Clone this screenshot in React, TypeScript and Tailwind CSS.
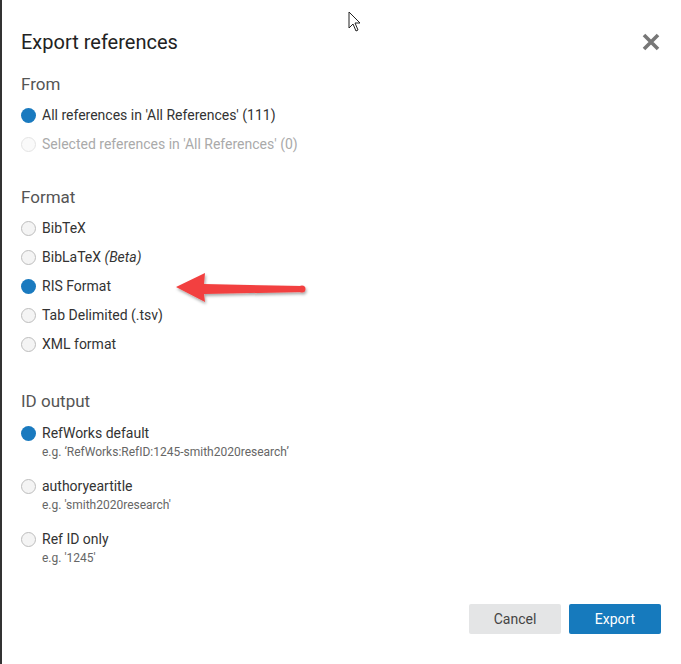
import React from "react";

const Radio = ({ on, disabled }: { on?: boolean; disabled?: boolean }) => (
  <span
    className={
      "inline-block w-[15px] h-[15px] rounded-full shrink-0 " +
      (on ? "bg-[#1a7abf]" : disabled ? "border border-[#e4e4e4] bg-[#fafafa]" : "border border-[#bdbdbd] bg-[#f4f4f4]")
    }
  />
);

const Row = ({ on, disabled, children }: { on?: boolean; disabled?: boolean; children: React.ReactNode }) => (
  <div className="h-[29px] flex items-center gap-[6px]">
    <Radio on={on} disabled={disabled} />
    <span className={"text-[14px] " + (disabled ? "text-[#aaa]" : "text-[#333]")}>{children}</span>
  </div>
);

const IdRow = ({ on, label, eg }: { on?: boolean; label: string; eg: string }) => (
  <div className="h-[53px] pt-[11px]">
    <div className="flex items-center gap-[6px]">
      <Radio on={on} />
      <span className="text-[14px] text-[#333] leading-[17px]">{label}</span>
    </div>
    <div className="pl-[21px] text-[12px] text-[#666] leading-[14px] mt-[3px]">{eg}</div>
  </div>
);

export default function App() {
  return (
    <div className="w-[681px] h-[664px] bg-white relative overflow-hidden border-l-2 border-[#333]" style={{ fontFamily: "Roboto, sans-serif" }}>
      <div className="pl-[19px] pr-[20px]">
        <div className="h-[64px] flex items-end pb-[7px] justify-between">
          <h1 className="text-[20px] text-[#222]">Export references</h1>
          <svg width="20" height="20" viewBox="0 0 20 20" className="mb-[5px]">
            <path d="M3 3L17 17M17 3L3 17" stroke="#777" strokeWidth="3.6" />
          </svg>
        </div>
        <div className="text-[17px] text-[#555] h-[38px] flex items-center pt-[3px]">From</div>
        <div className="-mt-[1px]">
          <Row on>All references in 'All References' (111)</Row>
          <Row disabled>Selected references in 'All References' (0)</Row>
        </div>
        <div className="text-[17px] text-[#555] h-[38px] flex items-end mt-[17px] pb-[4px]">Format</div>
        <Row>BibTeX</Row>
        <Row>BibLaTeX <i>(Beta)</i></Row>
        <Row on>RIS Format</Row>
        <Row>Tab Delimited (.tsv)</Row>
        <Row>XML format</Row>
        <div className="text-[17px] text-[#555] h-[38px] flex items-end mt-[17px] pb-[0px]">ID output</div>
        <IdRow on label="RefWorks default" eg="e.g. ‘RefWorks:RefID:1245-smith2020research’" />
        <IdRow label="authoryeartitle" eg="e.g. 'smith2020research'" />
        <IdRow label="Ref ID only" eg="e.g. '1245'" />
        <div className="flex justify-end gap-[8px] mt-[31px]">
          <button className="w-[92px] h-[30px] rounded-[2px] bg-[#e4e5e6] text-[#444] text-[14px]">Cancel</button>
          <button className="w-[92px] h-[30px] rounded-[2px] bg-[#167abd] text-white text-[14px]">Export</button>
        </div>
      </div>
      <svg className="absolute left-[170px] top-[268px]" width="140" height="40" viewBox="170 268 140 40">
        <defs>
          <filter id="s" x="-20%" y="-40%" width="140%" height="180%">
            <feDropShadow dx="1" dy="2" stdDeviation="1.5" floodOpacity="0.35" />
          </filter>
        </defs>
        <g filter="url(#s)" fill="#f2403f">
          <polygon points="174,287 203,273 202,284 300,286 302,292 202,294 203,302" />
          <circle cx="300" cy="289" r="3.5" />
        </g>
      </svg>
      <svg className="absolute left-[346px] top-[11px]" width="14" height="22" viewBox="0 0 14 22">
        <path d="M1 1L1 17L5 13L8 20L10 19L7 12L12 12Z" fill="white" stroke="#222" strokeWidth="1" />
      </svg>
    </div>
  );
}
